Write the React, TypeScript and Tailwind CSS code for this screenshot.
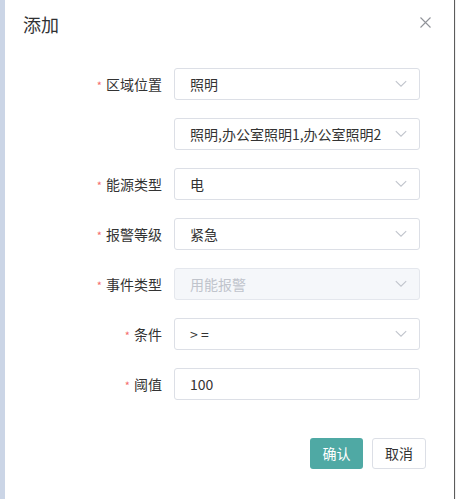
import React from "react";

interface Field {
    label: string;
    value: string;
    select?: boolean;
    disabled?: boolean;
    required?: boolean;
}

const fields: Field[] = [
    { label: "区域位置", value: "照明", select: true, required: true },
    { label: "", value: "照明,办公室照明1,办公室照明2", select: true },
    { label: "能源类型", value: "电", select: true, required: true },
    { label: "报警等级", value: "紧急", select: true, required: true },
    { label: "事件类型", value: "用能报警", select: true, disabled: true, required: true },
    { label: "条件", value: "> =", select: true, required: true },
    { label: "阈值", value: "100", required: true },
];

const Chevron = () => (
    <svg width="12" height="8" viewBox="0 0 12 8" fill="none" className="shrink-0">
        <path d="M0.8 1.2 L6 6.2 L11.2 1.2" stroke="#c0c4cc" strokeWidth="1.1" />
    </svg>
);

export default function App() {
    return (
        <div
            className="flex w-[456px] h-[499px] bg-white text-[#333] overflow-hidden"
            style={{ fontFamily: '"Noto Sans CJK SC", "Noto Sans", sans-serif' }}
        >
            <div className="w-[5px] bg-[#cbd5e6] shrink-0" />
            <div className="flex-1 flex flex-col bg-white">
                {/* header */}
                <div className="flex items-start justify-between pt-[12px] pl-[18px] pr-[23px] h-[68px]">
                    <span className="text-[18px] leading-[24px] text-[#303133]">添加</span>
                    <svg width="11" height="11" viewBox="0 0 11 11" className="mt-[5px]">
                        <path d="M0.5 0.5 L10.5 10.5 M10.5 0.5 L0.5 10.5" stroke="#909399" strokeWidth="1.1" />
                    </svg>
                </div>

                {/* form */}
                <div className="flex flex-col gap-[18px]">
                    {fields.map((f, i) => (
                        <div key={i} className="flex items-center h-8">
                            <div className="w-[169px] pr-[12px] flex justify-end items-center text-[14px] text-[#333]">
                                {f.required && (
                                    <span className="text-[#f56c6c] text-[11px] leading-none mr-[4px] mt-[3px]">*</span>
                                )}
                                <span>{f.label}</span>
                            </div>
                            <div
                                className={`w-[246px] h-8 flex items-center justify-between pl-[15px] pr-[12px] border rounded-[3px] text-[14px] ${
                                    f.disabled
                                        ? "bg-[#f5f7fa] border-[#e4e7ed] text-[#c0c4cc]"
                                        : "bg-white border-[#dcdfe6] text-[#333]"
                                }`}
                            >
                                <span className="whitespace-nowrap">{f.value}</span>
                                {f.select && <Chevron />}
                            </div>
                        </div>
                    ))}
                </div>

                {/* footer */}
                <div className="flex justify-end gap-[9px] pr-[28px] mt-[38px]">
                    <button className="w-[53px] h-[31px] rounded-[3px] bg-[#4fa9a4] text-white text-[14px]">确认</button>
                    <button className="w-[54px] h-[31px] rounded-[3px] bg-white border border-[#dcdfe6] text-[#333] text-[14px]">取消</button>
                </div>
            </div>
            <div className="w-px bg-[#5c5c5c] shrink-0" />
            <div className="w-px bg-[#f0f0f0] shrink-0" />
        </div>
    );
}
